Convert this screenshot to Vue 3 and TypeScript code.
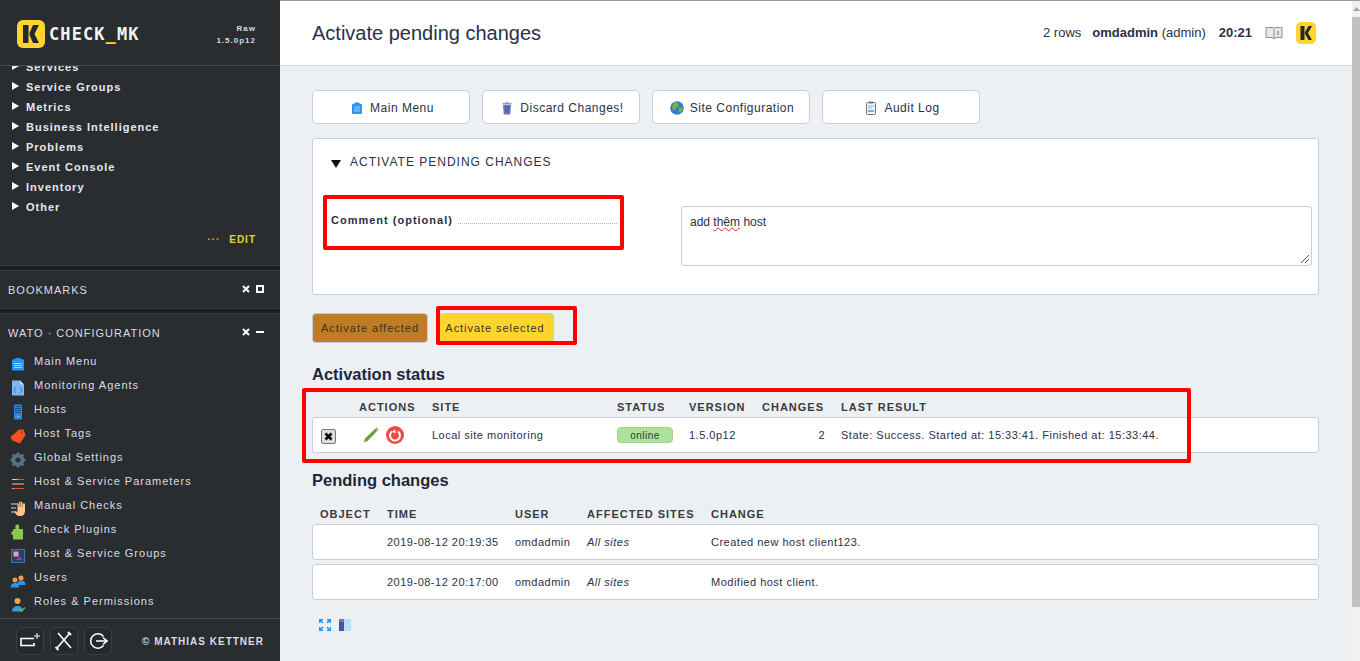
<template>
  <div class="page">
    <aside class="sidebar">
      <div class="side-head">
        <div class="logo">
          <svg class="logo-mark" width="28" height="28" viewBox="0 0 28 28">
            <rect width="28" height="28" rx="6" fill="#fed42f" />
            <path d="M6 5h5.500v18H6zM12.500 13l3.500-8h6l-4.500 9 4.500 9h-6l-3.500-8z" fill="#26292b" />
          </svg>
          <span class="logo-text">CHECK<span class="under">_</span>MK</span>
        </div>
        <div class="version">Raw<br />1.5.0p12</div>
      </div>

      <div class="tree">
        <div v-for="item in treeItems" :key="item" class="tree-item">
          <span class="tri"></span>{{ item }}
        </div>
        <div class="edit-row"><span class="dots">···</span><span class="edit">EDIT</span></div>
      </div>

      <div class="snapin-gap"></div>
      <div class="snapin-title bookmarks">
        <span>BOOKMARKS</span>
        <span class="snapin-ctl">
          <svg width="8" height="8" viewBox="0 0 8 8"><path d="M1 1l6 6M7 1L1 7" stroke="#fff" stroke-width="2" /></svg>
          <span class="box"></span>
        </span>
      </div>
      <div class="snapin-gap"></div>
      <div class="snapin-title wato">
        <span>WATO · CONFIGURATION</span>
        <span class="snapin-ctl">
          <svg width="8" height="8" viewBox="0 0 8 8"><path d="M1 1l6 6M7 1L1 7" stroke="#fff" stroke-width="2" /></svg>
          <span class="minus"></span>
        </span>
      </div>

      <div class="wato-list">
        <div v-for="m in watoItems" :key="m.name" class="wato-item">
          <svg class="wato-ico" width="16" height="16" viewBox="0 0 16 16" v-html="m.icon"></svg>
          <span>{{ m.name }}</span>
        </div>
      </div>

      <div class="side-foot">
        <div class="foot-btn">
          <svg width="22" height="18" viewBox="0 0 22 18" fill="none" stroke="#fff"><path d="M15 6.500H2v7h13V11" stroke-width="1.600" /><path d="M18 1v6M15 4h6" stroke-width="1" /></svg>
        </div>
        <div class="foot-btn">
          <svg width="20" height="20" viewBox="0 0 20 20" fill="none" stroke="#fff" stroke-width="1.600"><path d="M4 2l13 15M16 2L3 17" /><path d="M1.500 16l3 3M14 1l3 3" stroke-width="2" /></svg>
        </div>
        <div class="foot-btn">
          <svg width="20" height="20" viewBox="0 0 20 20" fill="none" stroke="#fff" stroke-width="1.600"><path d="M15.500 14.500A7.200 7.200 0 1 1 15.500 5.500" /><path d="M8 10h11M15 6.500l4 3.500-4 3.500" /></svg>
        </div>
        <span class="copyright">© MATHIAS KETTNER</span>
      </div>
    </aside>

    <main class="main">
      <header class="topbar">
        <h1>Activate pending changes</h1>
        <div class="top-right">
          <span>2 rows</span>
          <span class="user"><b>omdadmin</b> (admin)</span>
          <b class="clock">20:21</b>
          <svg class="book" width="18" height="14" viewBox="0 0 18 14">
            <path d="M1 1.500h7l1 1 1-1h7v10h-6l-2 1.500-2-1.500H1z" fill="#e8e8e8" stroke="#8f8f8f" />
            <path d="M9 2.500v10" stroke="#8f8f8f" />
            <path d="M13 5v4" stroke="#8f8f8f" stroke-width="1.500" />
          </svg>
          <svg class="mini-logo" width="20" height="22" viewBox="0 0 20 22">
            <rect width="20" height="22" rx="5" fill="#fed42f" />
            <path d="M4.500 4h4v14h-4zM9 10l3.500-6h3.500l-4 7 4 7h-3.500L9 12z" fill="#26292b" />
          </svg>
        </div>
      </header>

      <div class="content">
        <div class="actions">
          <button v-for="b in topButtons" :key="b.name" class="action-btn">
            <svg width="14" height="14" viewBox="0 0 14 14" v-html="b.icon"></svg>
            {{ b.name }}
          </button>
        </div>

        <section class="panel">
          <div class="panel-title"><span class="down"></span>ACTIVATE PENDING CHANGES</div>
          <div class="form-row">
            <div class="form-label">
              <b>Comment (optional)</b><span class="leader"></span>
            </div>
            <div class="fake-area"><span>add <span class="typo">thêm</span> host</span>
              <svg class="grip" width="8" height="8" viewBox="0 0 8 8"><path d="M0 8l8-8M4 8l4-4" stroke="#555" /></svg>
            </div>
          </div>
        </section>

        <div class="activate">
          <button class="btn-affected">Activate affected</button>
          <button class="btn-selected">Activate selected</button>
        </div>

        <h2 class="status-title">Activation status</h2>
        <div class="cols status-cols heads">
          <span></span><span>ACTIONS</span><span>SITE</span><span>STATUS</span><span>VERSION</span><span>CHANGES</span><span>LAST RESULT</span>
        </div>
        <div class="cols status-cols row-card">
          <span class="check">
            <svg width="9" height="9" viewBox="0 0 9 9"><path d="M1.500 1.500l6 6M7.500 1.500l-6 6" stroke="#000" stroke-width="2.600" /></svg>
          </span>
          <span class="row-actions">
            <svg width="18" height="18" viewBox="0 0 18 18">
              <path d="M1.500 16.500l1.500-4L13.500 2.500l2 2L5.500 15z" fill="#5aa832" />
              <path d="M13.500 2.500l1.200-1.200 2 2L15.500 4.500z" fill="#e88b8b" />
              <path d="M1.500 16.500l.8-2.400 1.600 1.600z" fill="#e8c060" />
            </svg>
            <svg width="18" height="18" viewBox="0 0 18 18">
              <circle cx="9" cy="9" r="9" fill="#ee4a46" />
              <path d="M6 5.500a5 5 0 1 0 6 0" fill="none" stroke="#fff" stroke-width="2" />
              <path d="M9.500 3.500v4l-3.500-2z" fill="#fff" />
            </svg>
          </span>
          <span>Local site monitoring</span>
          <span><span class="online">online</span></span>
          <span>1.5.0p12</span>
          <span class="num">2</span>
          <span>State: Success. Started at: 15:33:41. Finished at: 15:33:44.</span>
        </div>

        <h2 class="pending-title">Pending changes</h2>
        <div class="cols pending-cols heads pending-heads">
          <span>OBJECT</span><span>TIME</span><span>USER</span><span>AFFECTED SITES</span><span>CHANGE</span>
        </div>
        <div v-for="c in changes" :key="c.time" class="cols pending-cols row-card pending-row">
          <span></span>
          <span>{{ c.time }}</span>
          <span>omdadmin</span>
          <i>All sites</i>
          <span>{{ c.text }}</span>
        </div>

        <div class="foot-icons">
          <svg width="12" height="12" viewBox="0 0 12 12" fill="none" stroke="#2a95f5" stroke-width="1.500">
            <path d="M.7 4V.7H4M8 .7h3.300V4M11.300 8v3.300H8M4 11.300H.7V8M1 1l3 3M11 1L8 4M11 11L8 8M1 11l3-3" />
          </svg>
          <svg width="12" height="12" viewBox="0 0 12 12">
            <rect width="12" height="12" fill="#bcdcfb" />
            <rect width="5" height="12" fill="#4350b0" />
            <rect width="5" height="3" fill="#6b7f95" />
          </svg>
        </div>
      </div>
    </main>

    <div class="scrollbar">
      <svg width="9" height="6" viewBox="0 0 9 6"><path d="M4.500 1L8 5H1z" fill="#a3a3a3" /></svg>
      <div class="thumb"></div>
    </div>

    <div class="mark mark-comment"></div>
    <div class="mark mark-selected"></div>
    <div class="mark mark-table"></div>
    <div class="top-line"></div>
  </div>
</template>

<script setup lang="ts">
const treeItems = ['Services', 'Service Groups', 'Metrics', 'Business Intelligence', 'Problems', 'Event Console', 'Inventory', 'Other']

const homeIcon = '<path d="M7 1l5 2.500V12a1 1 0 0 1-1 1H3a1 1 0 0 1-1-1V3.500z" fill="#2a95f5"/><path d="M4 6h6M4 8h6M4 10h6" stroke="#bfe0fd" stroke-width=".8"/>'

const watoItems = [
  { name: 'Main Menu', icon: '<path d="M8 1.500l6 2.500v9.500a1 1 0 0 1-1 1H3a1 1 0 0 1-1-1V4z" fill="#2a95f5"/><path d="M4 7.500h8M4 9.500h8M4 11.500h8" stroke="#bfe0fd" stroke-width=".8"/>' },
  { name: 'Monitoring Agents', icon: '<path d="M2 .5h8l4 4v11H2z" fill="#7db8f5"/><path d="M10 .5v4h4z" fill="#bcdcfb"/><path d="M6 7L4 10l2 3M10 7l2 3-2 3" stroke="#2a6fc0" fill="none" stroke-width=".9"/>' },
  { name: 'Hosts', icon: '<rect x="4" y=".5" width="8" height="15" rx=".5" fill="#2a86e0"/><path d="M5 2.500h6M5 4.500h6M5 6.500h6M5 8.500h6" stroke="#0f4f8f"/><circle cx="8" cy="12.500" r=".7" fill="#bfe0fd"/>' },
  { name: 'Host Tags', icon: '<path d="M9 1.500h4.500L15.500 7l-5.500 8.500-8-3L.5 9z" fill="#f4511e"/><circle cx="11.500" cy="4.500" r="1" fill="#c23512"/>' },
  { name: 'Global Settings', icon: '<circle cx="8" cy="8" r="4.500" fill="none" stroke="#567282" stroke-width="4"/><path d="M8 .5v3M8 12.500v3M.5 8h3M12.500 8h3M2.700 2.700l2.200 2.200M11.100 11.100l2.200 2.200M13.300 2.700l-2.200 2.200M4.900 11.100l-2.200 2.200" stroke="#567282" stroke-width="2.400"/>' },
  { name: 'Host & Service Parameters', icon: '<path d="M2 3.500h12M2 8h12M2 12.500h12" stroke="#d4d4d4" stroke-width="1.200"/><path d="M8 3.500h6M9 8h5M5 12.500h9" stroke="#e0552b" stroke-width="1.200"/><circle cx="8" cy="3.500" r="1" fill="#e0552b"/><circle cx="4" cy="12.500" r="1" fill="#e0552b"/>' },
  { name: 'Manual Checks', icon: '<path d="M1 4h7M1 8h5M1 12h5" stroke="#d4d4d4" stroke-width="1.200"/><path d="M8.500 16c-2-.5-3.500-2.500-4-4.500l1.500-.5 1.500 1.500V3.500h1.300V7h.4V1.500h1.400V7h.4V2h1.400v5h.4V3.500H15V11c0 3-2 5-4 5z" fill="#fcc48a"/>' },
  { name: 'Check Plugins', icon: '<path d="M2 5h3.500V3.500a2 2 0 1 1 3.500 0V5h4v10.500H3V11H1.500V7.500H3V5z" fill="#8cc850"/>' },
  { name: 'Host & Service Groups', icon: '<rect x="1.500" y="1.500" width="13" height="13" fill="#3d3a4c" stroke="#2a78d0"/><rect x="3.500" y="3.500" width="5" height="5" fill="#c9a8e8"/><path d="M5.500 12l4-3.500 3.500 3.500z" fill="#9a35b8"/>' },
  { name: 'Users', icon: '<circle cx="5" cy="8" r="2.500" fill="#e89a48"/><circle cx="11" cy="6" r="2.500" fill="#f0a04b"/><path d="M.5 15.500c0-3 2-4.500 4.500-4.500s4 1.500 4 4.500z" fill="#2a95f5"/><path d="M7 13c0-3 2-4.500 4-4.500s4.500 1 4.500 4v.5z" fill="#2a95f5"/>' },
  { name: 'Roles & Permissions', icon: '<circle cx="7.500" cy="5" r="3" fill="#f0a04b"/><path d="M2 15.500c0-4 3-5.500 5.500-5.500s5.500 1.500 5.500 5.500z" fill="#3a9fd0"/><path d="M10 13.500l1.500 1.500 3.500-3.500" stroke="#5cb85c" stroke-width="1.400" fill="none"/>' }
]

const topButtons = [
  { name: 'Main Menu', icon: homeIcon },
  { name: 'Discard Changes!', icon: '<path d="M3 4h8l-.8 9.500H3.800z" fill="#6f78b8"/><rect x="2.500" y="2" width="9" height="1.500" fill="#8f97c8"/><rect x="5.500" y="1" width="3" height="1" fill="#8f97c8"/><path d="M5.500 5v7M7 5v7M8.500 5v7" stroke="#3f4a90" stroke-width=".6"/>' },
  { name: 'Site Configuration', icon: '<circle cx="7" cy="7" r="6.800" fill="#2a7fd0"/><path d="M5 1l3 1 1 3-3 2-2 3-2-3 1-4zM9 7l3.500-1L13 9l-3 3-1-2z" fill="#7fb23a"/>' },
  { name: 'Audit Log', icon: '<rect x="2.500" y="1.500" width="9" height="12" rx="1" fill="#eef3f7" stroke="#6b7884"/><rect x="5" y=".5" width="4" height="2" fill="#6b7884"/><path d="M4 5h6M4 7h4" stroke="#9aa6b0" stroke-width=".8"/><rect x="4" y="9" width="6" height="2" fill="#63b5f5"/>' }
]

const changes = [
  { time: '2019-08-12 20:19:35', text: 'Created new host client123.' },
  { time: '2019-08-12 20:17:00', text: 'Modified host client.' }
]
</script>

<style scoped>
.page {
  position: relative;
  display: flex;
  width: 1360px;
  height: 661px;
  overflow: hidden;
  font-family: "Liberation Sans", Arial, sans-serif;
  background: #edf0f3;
  color: #1e2640;
}

.top-line {
  position: absolute;
  left: 0;
  top: 0;
  right: 0;
  height: 1px;
  background: #9a9a9a;
}

.sidebar {
  width: 280px;
  flex-shrink: 0;
  display: flex;
  flex-direction: column;
  background: #2a2d2f;
  color: #e4e8f2;
  overflow: hidden;
}

.side-head {
  height: 66px;
  flex-shrink: 0;
  box-sizing: border-box;
  display: flex;
  justify-content: space-between;
  padding: 20px 24px 0 17px;
  border-bottom: 1px solid #4a4d50;
  background: #2a2d2f;
  position: relative;
  z-index: 1;
}

.logo { display: flex; gap: 4px; align-items: flex-start; }
.logo-mark { display: block; }

.logo-text {
  font-family: "DejaVu Sans Mono", monospace;
  font-size: 18px;
  font-weight: 700;
  color: #f4f4f4;
  line-height: 28px;
  letter-spacing: 1.200px;
  transform: scaleX(.94);
  transform-origin: left;
}

.under { color: #fed42f; }

.version {
  font-size: 8px;
  font-weight: 700;
  letter-spacing: 1px;
  line-height: 12px;
  text-align: right;
  color: #d6dae2;
  margin-top: 3px;
}

.tree { height: 208px; flex-shrink: 0; margin-top: -9px; }

.tree-item {
  height: 20px;
  line-height: 20px;
  padding-left: 12px;
  font-size: 11px;
  font-weight: 700;
  letter-spacing: 1px;
  white-space: nowrap;
}

.tri {
  display: inline-block;
  width: 0;
  height: 0;
  border-left: 7px solid #fff;
  border-top: 4.500px solid transparent;
  border-bottom: 4.500px solid transparent;
  margin-right: 7px;
  vertical-align: 1px;
}

.edit-row {
  display: flex;
  justify-content: flex-end;
  align-items: center;
  gap: 9px;
  padding: 17px 24px 0 0;
  font-size: 10px;
  font-weight: 700;
  letter-spacing: 1px;
  color: #f0d020;
}

.dots { color: #e0a030; }

.snapin-gap {
  height: 4px;
  flex-shrink: 0;
  background: #1c1e1f;
  border-top: 1px solid #3a3d40;
  border-bottom: 1px solid #3a3d40;
}

.snapin-title {
  display: flex;
  justify-content: space-between;
  align-items: center;
  flex-shrink: 0;
  padding: 0 16px 0 8px;
  font-size: 11px;
  letter-spacing: 1px;
  color: #d8dce6;
}

.bookmarks { height: 37px; }
.wato { height: 38px; padding-bottom: 2px; }
.snapin-ctl { display: flex; align-items: center; gap: 6px; margin-top: -2px; }
.box { width: 8px; height: 8px; box-sizing: border-box; border: 2px solid #fff; }
.minus { width: 8px; height: 2px; background: #fff; }

.wato-list { flex: 1; margin-top: -4px; }

.wato-item {
  height: 24px;
  display: flex;
  align-items: center;
  padding-left: 10px;
  gap: 8px;
  font-size: 11px;
  letter-spacing: 1px;
  color: #d8dce6;
  white-space: nowrap;
}

.wato-item span { margin-top: -2px; }
.wato-ico { margin-top: 3px; }

.side-foot {
  height: 43px;
  flex-shrink: 0;
  box-sizing: border-box;
  display: flex;
  align-items: center;
  gap: 6px;
  padding: 2px 16px 0;
  border-top: 1px solid #4a4d50;
}

.foot-btn {
  width: 28px;
  height: 28px;
  box-sizing: border-box;
  border: 1px solid #3c3f42;
  border-radius: 5px;
  display: flex;
  align-items: center;
  justify-content: center;
  background: #26292b;
}

.copyright {
  font-size: 10px;
  font-weight: 700;
  letter-spacing: 1px;
  margin-left: auto;
  color: #d8dce6;
}

.main { flex: 1; min-width: 0; display: flex; flex-direction: column; }

.topbar {
  height: 66px;
  flex-shrink: 0;
  box-sizing: border-box;
  background: #fff;
  border-bottom: 1px solid #d2d5e0;
  display: flex;
  align-items: center;
  justify-content: space-between;
  padding: 0 36px 0 32px;
}

.topbar h1 {
  margin: 0;
  padding-top: 2px;
  font-size: 20px;
  font-weight: 400;
  color: #2a3048;
}

.top-right {
  display: flex;
  align-items: center;
  font-size: 13px;
  color: #2a3048;
}

.user { margin-left: 11px; }
.clock { margin-left: 13px; }
.book { margin-left: 13px; }
.mini-logo { margin-left: 13px; }

.content { padding: 24px 33px 0 32px; }

.actions { display: flex; gap: 12px; }

.action-btn {
  width: 158px;
  height: 34px;
  display: flex;
  align-items: center;
  justify-content: center;
  gap: 6px;
  background: #fff;
  border: 1px solid #c9ccdc;
  border-radius: 5px;
  font: 12px "Liberation Sans", Arial, sans-serif;
  letter-spacing: .5px;
  color: #2a3048;
  padding: 1px 0 0 2px;
}

.panel {
  margin-top: 14px;
  height: 157px;
  box-sizing: border-box;
  background: #fff;
  border: 1px solid #c9ccdc;
  border-radius: 3px;
  padding: 16px 6px 0 18px;
}

.panel-title {
  font-size: 12px;
  letter-spacing: 1px;
  color: #2a3048;
  display: flex;
  align-items: center;
  line-height: 14px;
}

.down {
  width: 0;
  height: 0;
  border-top: 8px solid #111;
  border-left: 5px solid transparent;
  border-right: 5px solid transparent;
  margin-right: 9px;
  margin-top: 3px;
}

.form-row { display: flex; margin-top: 37px; }

.form-label {
  width: 350px;
  flex-shrink: 0;
  display: flex;
  align-items: baseline;
  padding-top: 8px;
  font-size: 11px;
  letter-spacing: 1px;
  height: 20px;
  padding-right: 64px;
  box-sizing: border-box;
  color: #2a3048;
}

.form-label b { white-space: nowrap; }

.leader {
  flex: 1;
  margin-left: 5px;
  border-bottom: 1px dotted #b4b7c2;
}

.fake-area {
  position: relative;
  flex: 1;
  height: 60px;
  box-sizing: border-box;
  border: 1px solid #c9ccdc;
  border-radius: 3px;
  padding: 8px;
  font-size: 12px;
  line-height: 14px;
  color: #2a3048;
}

.typo { text-decoration: underline wavy #e02020 1px; }
.grip { position: absolute; right: 2px; bottom: 2px; }

.activate { display: flex; margin-top: 18px; gap: 11px; align-items: flex-start; }

.activate button {
  height: 30px;
  border-radius: 4px;
  font: 11px "Liberation Sans", Arial, sans-serif;
  letter-spacing: 1px;
  padding: 0;
  color: #3a3420;
  border: 1px solid #c9ccdc;
}

.btn-affected { width: 116px; background: #bd7c25; }
.activate .btn-selected { width: 115px; background: #fed42f; padding-right: 3px; letter-spacing: .95px; }

.status-title, .pending-title {
  margin: 0;
  font-size: 16.500px;
  font-weight: 700;
  color: #1e2640;
  line-height: 20px;
}

.status-title { margin-top: 21px; }
.pending-title { margin-top: 17px; }

.cols {
  display: grid;
  align-items: center;
  font-size: 11px;
  letter-spacing: .5px;
  white-space: nowrap;
}

.status-cols { grid-template-columns: 39px 73px 185px 72px 73px 79px 1fr; }
.pending-cols { grid-template-columns: 67px 128px 72px 124px 1fr; }

.heads {
  font-weight: 700;
  letter-spacing: 1px;
  color: #3a3a42;
  height: 17px;
  padding-left: 8px;
  margin-top: 14px;
  margin-bottom: 2px;
}

.pending-heads { margin-top: 15px; margin-bottom: 2px; }

.row-card {
  height: 36px;
  box-sizing: border-box;
  background: #fff;
  border: 1px solid #c9ccdc;
  border-radius: 3px;
  padding-left: 7px;
  color: #2a3048;
}

.pending-row { margin-bottom: 4px; }
.pending-row:last-of-type { margin-bottom: 0; }

.check {
  width: 15px;
  height: 15px;
  box-sizing: border-box;
  border: 1px solid #777;
  border-radius: 2px;
  background: #dedede;
  display: flex;
  align-items: center;
  justify-content: center;
  margin: 2px 0 0 1px;
}

.row-actions { display: flex; gap: 6px; padding-left: 3px; }

.online {
  display: inline-block;
  width: 56px;
  height: 16px;
  text-align: center;
  box-sizing: border-box;
  background: #abe19b;
  border: 1px solid #9bd68b;
  border-radius: 4px;
  font-size: 10px;
  line-height: 15px;
  color: #2a4030;
}

.num { text-align: right; padding-right: 16px; }

.foot-icons { display: flex; gap: 8px; margin-top: 19px; padding-left: 7px; }

.scrollbar {
  width: 8px;
  flex-shrink: 0;
  background: #f1f1f1;
  display: flex;
  flex-direction: column;
  align-items: center;
  padding-top: 6px;
  height: 100%;
  box-sizing: border-box;
}

.thumb { width: 100%; height: 590px; background: #c1c1c1; margin-top: 5px; }

.mark {
  position: absolute;
  box-sizing: border-box;
  border: 4px solid #ff0000;
  border-radius: 2px;
  pointer-events: none;
}

.mark-comment { left: 323px; top: 195px; width: 301px; height: 55px; }
.mark-selected { left: 436px; top: 306px; width: 141px; height: 39px; }
.mark-table { left: 302px; top: 388px; width: 889px; height: 75px; }
</style>
